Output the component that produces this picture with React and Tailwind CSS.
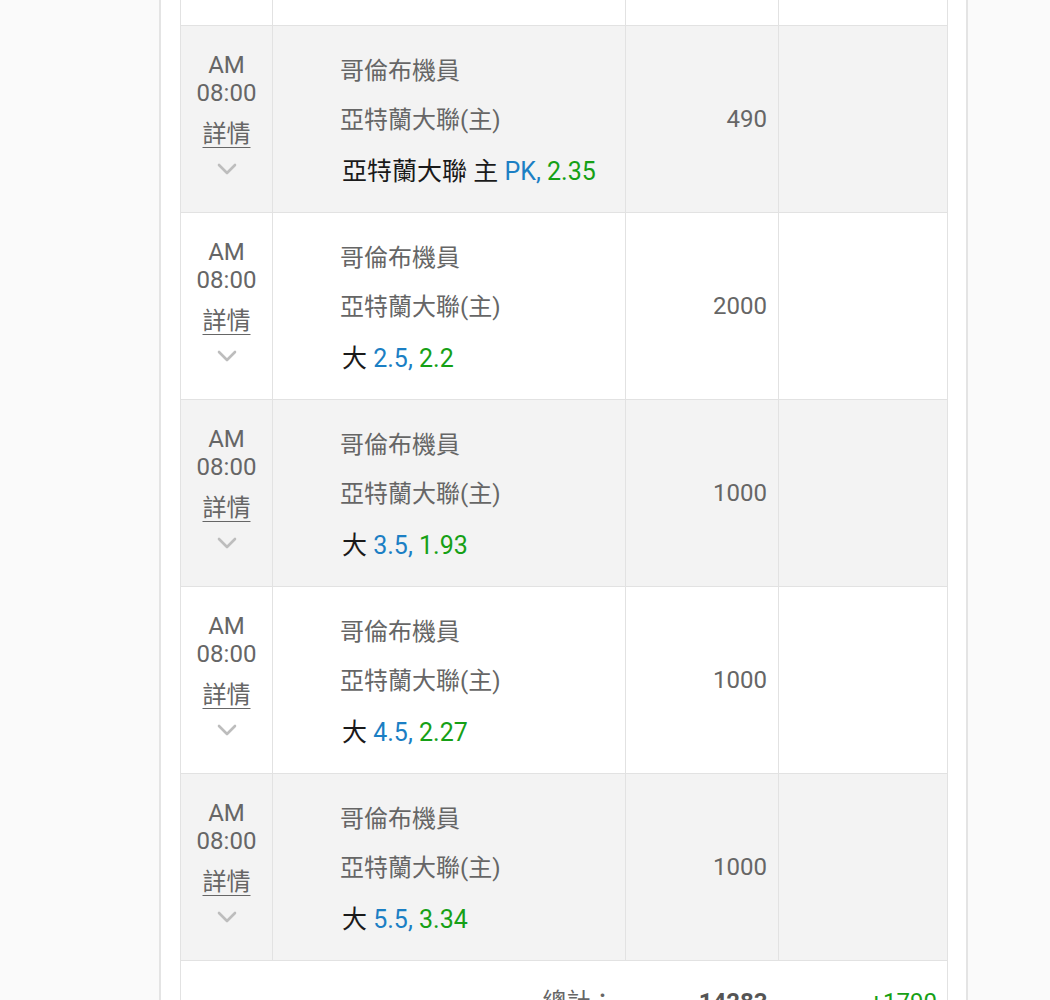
const rows = [
  { bg: "bg-[#f3f3f3]", pick: "亞特蘭大聯 主", line: "PK", odds: "2.35", amount: "490" },
  { bg: "bg-white", pick: "大", line: "2.5", odds: "2.2", amount: "2000" },
  { bg: "bg-[#f3f3f3]", pick: "大", line: "3.5", odds: "1.93", amount: "1000" },
  { bg: "bg-white", pick: "大", line: "4.5", odds: "2.27", amount: "1000" },
  { bg: "bg-[#f3f3f3]", pick: "大", line: "5.5", odds: "3.34", amount: "1000" },
];

const cell = "border border-[#e2e2e2] p-0";

function Chevron() {
  return (
    <svg width="20" height="12" viewBox="0 0 20 12" className="mx-auto mt-[14px]">
      <path d="M2 2 L10 10 L18 2" fill="none" stroke="#bdbdbd" strokeWidth="2.6" strokeLinecap="round" strokeLinejoin="round" />
    </svg>
  );
}

export default function App() {
  return (
    <div
      className="min-h-[1000px] bg-[#fafafa] text-[24px]"
      style={{ fontFamily: 'Roboto, "Noto Sans CJK TC", sans-serif' }}
    >
      <div className="ml-[159px] w-[809px] min-h-[1000px] bg-white border-x-2 border-[#e4e4e4] px-[19px]">
        <table className="w-[767px] border-collapse table-fixed">
          <colgroup>
            <col className="w-[92px]" />
            <col className="w-[353px]" />
            <col className="w-[153px]" />
            <col className="w-[169px]" />
          </colgroup>
          <tbody>
            <tr className="h-[25px] bg-white">
              <td className={`${cell} border-t-0`} />
              <td className={`${cell} border-t-0`} />
              <td className={`${cell} border-t-0`} />
              <td className={`${cell} border-t-0`} />
            </tr>
            {rows.map((r, i) => (
              <tr key={i} className={`h-[187px] ${r.bg}`}>
                <td className={`${cell} text-center align-middle text-[#666] pb-[12px]`}>
                  <div className="leading-[28px]">AM</div>
                  <div className="leading-[28px]">08:00</div>
                  <div className="mt-[12px] leading-[30px] underline underline-offset-[5px] decoration-1">詳情</div>
                  <Chevron />
                </td>
                <td className={`${cell} align-middle pl-[67px] pt-[5px]`}>
                  <div className="text-[#666] leading-[30px]">哥倫布機員</div>
                  <div className="text-[#666] leading-[30px] mt-[19px]">亞特蘭大聯(主)</div>
                  <div className="text-[#1a1a1a] text-[25px] leading-[30px] mt-[22px] pl-[2px]">
                    {r.pick} <span className="text-[#1b7fc4]">{r.line},</span>{" "}
                    <span className="text-[#16a016]">{r.odds}</span>
                  </div>
                </td>
                <td className={`${cell} align-middle text-right pr-[11px] text-[#666]`}>{r.amount}</td>
                <td className={cell} />
              </tr>
            ))}
            <tr className="h-[84px] bg-white">
              <td colSpan={2} className="border border-[#e2e2e2] border-r-0 align-middle text-right pr-[11px] text-[#666]">
                總計：
              </td>
              <td className="border-y border-[#e2e2e2] align-middle text-right pr-[11px] font-bold text-[#555]">14283</td>
              <td className="border border-[#e2e2e2] border-l-0 align-middle text-right pr-[10px] text-[#16a016]">+1790</td>
            </tr>
          </tbody>
        </table>
      </div>
    </div>
  );
}
